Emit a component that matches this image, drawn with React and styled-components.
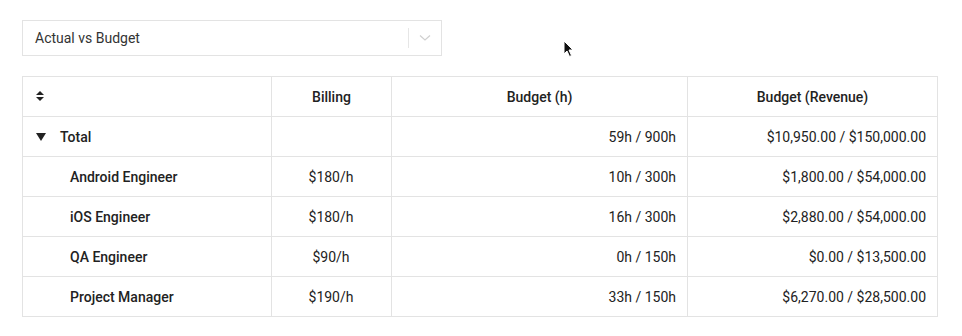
import React from 'react';
import styled, { createGlobalStyle } from 'styled-components';

const GlobalStyle = createGlobalStyle`
  html, body {
    margin: 0;
    padding: 0;
    background: #fff;
  }
  body {
    font-family: Roboto, "Liberation Sans", sans-serif;
    color: #222;
  }
`;

const Page = styled.div`
  position: relative;
  width: 962px;
  height: 336px;
  box-sizing: border-box;
  padding: 20px 24px 0 22px;
  display: flex;
  flex-direction: column;
  gap: 20px;
`;

const Select = styled.div`
  width: 420px;
  height: 36px;
  box-sizing: border-box;
  border: 1px solid #e3e3e3;
  display: flex;
  align-items: center;
  font-size: 14px;
  color: #333;
`;

const SelectValue = styled.div`
  flex: 1;
  padding-left: 12px;
`;

const SelectDivider = styled.span`
  width: 1px;
  height: 20px;
  background: #e6e6e6;
`;

const SelectArrow = styled.div`
  width: 32px;
  display: flex;
  justify-content: center;
  align-items: center;
`;

const Table = styled.table`
  width: 915px;
  border-collapse: collapse;
  table-layout: fixed;
  font-size: 14px;
`;

const Th = styled.th`
  height: 39px;
  border: 1px solid #e3e3e3;
  font-weight: 500;
  text-align: ${p => p.$align || 'center'};
  padding: 0 11px;
  color: #222;
`;

const Td = styled.td`
  height: 39px;
  border: 1px solid #e3e3e3;
  padding: 0 11px 0 10px;
  text-align: ${p => p.$align || 'left'};
  color: #222;
  white-space: nowrap;
`;

const NameCell = styled.div`
  display: flex;
  align-items: center;
  gap: 14px;
  padding-left: ${p => (p.$indent ? '37px' : '0')};
  font-weight: 500;
`;

const Cursor = styled.svg`
  position: absolute;
  left: 563px;
  top: 40px;
`;

const rows = [
  { name: 'Android Engineer', billing: '$180/h', hours: '10h / 300h', revenue: '$1,800.00 / $54,000.00' },
  { name: 'iOS Engineer', billing: '$180/h', hours: '16h / 300h', revenue: '$2,880.00 / $54,000.00' },
  { name: 'QA Engineer', billing: '$90/h', hours: '0h / 150h', revenue: '$0.00 / $13,500.00' },
  { name: 'Project Manager', billing: '$190/h', hours: '33h / 150h', revenue: '$6,270.00 / $28,500.00' },
];

const SortIcon = () => (
  <svg width="10" height="12" viewBox="0 0 10 12">
    <path d="M5 1 L9 5 H1 Z" fill="#222" />
    <path d="M5 11 L9 7 H1 Z" fill="#222" />
  </svg>
);

const Caret = () => (
  <svg width="10" height="8" viewBox="0 0 10 8">
    <path d="M0 0 H10 L5 8 Z" fill="#222" />
  </svg>
);

export default function App() {
  return (
    <Page>
      <GlobalStyle />
      <Select>
        <SelectValue>Actual vs Budget</SelectValue>
        <SelectDivider />
        <SelectArrow>
          <svg width="12" height="8" viewBox="0 0 12 8">
            <path d="M1 1.5 L6 6 L11 1.5" fill="none" stroke="#d0d0d0" strokeWidth="1.2" />
          </svg>
        </SelectArrow>
      </Select>
      <Table>
        <colgroup>
          <col style={{ width: 249 }} />
          <col style={{ width: 120 }} />
          <col style={{ width: 296 }} />
          <col style={{ width: 250 }} />
        </colgroup>
        <thead>
          <tr>
            <Th $align="left" style={{ paddingLeft: 12 }}><SortIcon /></Th>
            <Th>Billing</Th>
            <Th>Budget (h)</Th>
            <Th>Budget (Revenue)</Th>
          </tr>
        </thead>
        <tbody>
          <tr>
            <Td style={{ paddingLeft: 13 }}>
              <NameCell><Caret />Total</NameCell>
            </Td>
            <Td />
            <Td $align="right">59h / 900h</Td>
            <Td $align="right">$10,950.00 / $150,000.00</Td>
          </tr>
          {rows.map(r => (
            <tr key={r.name}>
              <Td><NameCell $indent>{r.name}</NameCell></Td>
              <Td $align="center">{r.billing}</Td>
              <Td $align="right">{r.hours}</Td>
              <Td $align="right">{r.revenue}</Td>
            </tr>
          ))}
        </tbody>
      </Table>
      <Cursor width="12" height="18" viewBox="0 0 12 18">
        <path d="M1 1 V14 L4 11 L6.5 16.5 L8.5 15.5 L6 10 H10 Z" fill="#111" stroke="#fff" strokeWidth="1" />
      </Cursor>
    </Page>
  );
}
